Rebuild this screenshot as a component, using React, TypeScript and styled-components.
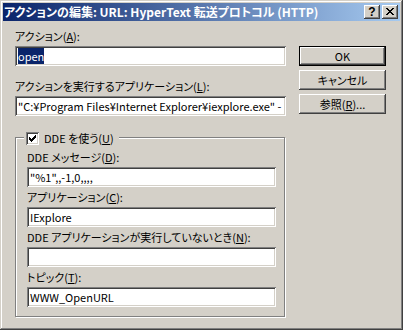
import React from "react";
import styled, { createGlobalStyle } from "styled-components";

const GlobalStyle = createGlobalStyle`
  html, body { margin: 0; padding: 0; background: #d4d0c8; }
  body {
    font-family: "Noto Sans CJK JP", "Liberation Sans", sans-serif;
    font-size: 11px;
    font-feature-settings: "palt";
    color: #000;
  }
`;

const Win = styled.div`
  width: 403px;
  height: 330px;
  box-sizing: border-box;
  padding: 3px;
  background: #d4d0c8;
  box-shadow: inset -1px -1px #404040, inset 1px 1px #d4d0c8,
    inset -2px -2px #808080, inset 2px 2px #ffffff;
  display: flex;
  flex-direction: column;
`;

const TitleBar = styled.div`
  height: 18px;
  flex-shrink: 0;
  background: linear-gradient(to right, #0a246a, #a6caf0);
  display: flex;
  align-items: center;
  padding: 0 2px 0 1px;
  color: #fff;
  font-weight: bold;
  font-size: 12px;
  line-height: 18px;
  white-space: nowrap;
`;

const TitleText = styled.span`
  flex: 1;
`;

const CapButtons = styled.div`
  display: flex;
  gap: 2px;
`;

const CapButton = styled.div`
  width: 16px;
  height: 14px;
  box-sizing: border-box;
  background: #d4d0c8;
  box-shadow: inset -1px -1px #404040, inset 1px 1px #ffffff,
    inset -2px -2px #808080, inset 2px 2px #d4d0c8;
  display: flex;
  align-items: center;
  justify-content: center;
  color: #000;
  font-family: "Liberation Sans", sans-serif;
  font-weight: bold;
  font-size: 12px;
  line-height: 14px;
  padding-bottom: 1px;
`;

const Body = styled.div`
  flex: 1;
  display: flex;
  padding: 9px 0 0 12px;
  gap: 13px;
`;

const LeftCol = styled.div`
  width: 271px;
  display: flex;
  flex-direction: column;
`;

const Label = styled.div<{ $top?: number }>`
  height: 13px;
  line-height: 13px;
  margin-top: ${(p) => p.$top ?? 0}px;
  margin-bottom: 3px;
  white-space: nowrap;
`;

const Field = styled.div`
  height: 20px;
  box-sizing: border-box;
  background: #fff;
  box-shadow: inset 1px 1px #808080, inset -1px -1px #ffffff,
    inset 2px 2px #404040, inset -2px -2px #d4d0c8;
  padding: 2px 2px 2px 3px;
  line-height: 16px;
  white-space: nowrap;
  overflow: hidden;
`;

const Sel = styled.span`
  background: #0a246a;
  color: #fff;
`;

const Key = styled.span`
  text-decoration: underline;
`;

const Group = styled.div`
  margin-top: 21px;
  position: relative;
  border: 1px solid #808080;
  box-shadow: inset 1px 1px #ffffff, 1px 1px #ffffff;
  padding: 13px 8px 9px 11px;
  width: 270px;
  box-sizing: border-box;
  display: flex;
  flex-direction: column;
`;

const Legend = styled.div`
  position: absolute;
  top: -6px;
  left: 8px;
  height: 13px;
  padding: 0 5px 0 2px;
  background: #d4d0c8;
  display: flex;
  align-items: center;
  gap: 5px;
  line-height: 13px;
  white-space: nowrap;
`;

const CheckBox = styled.div`
  width: 13px;
  height: 13px;
  box-sizing: border-box;
  background: #fff;
  box-shadow: inset 1px 1px #808080, inset -1px -1px #ffffff,
    inset 2px 2px #404040, inset -2px -2px #d4d0c8;
  display: flex;
  align-items: center;
  justify-content: center;
`;

const RightCol = styled.div`
  width: 87px;
  display: flex;
  flex-direction: column;
  padding-top: 16px;
  gap: 4px;
`;

const Button = styled.div<{ $default?: boolean }>`
  height: 20px;
  box-sizing: border-box;
  background: #d4d0c8;
  display: flex;
  align-items: center;
  justify-content: center;
  line-height: 13px;
  white-space: nowrap;
  box-shadow: ${(p) =>
    p.$default
      ? "inset 0 0 0 1px #000, inset -2px -2px #404040, inset 2px 2px #ffffff, inset -3px -3px #808080"
      : "inset -1px -1px #404040, inset 1px 1px #ffffff, inset -2px -2px #808080"};
`;

const Check = () => (
  <svg width="7" height="7" viewBox="0 0 7 7" shapeRendering="crispEdges">
    <path
      fill="#000"
      d="M6 0h1v1h-1zM5 1h2v1h-2zM0 2h1v1h-1zM4 2h3v1h-3zM0 3h2v1h-2zM3 3h3v1h-3zM0 4h5v1h-5zM1 5h3v1h-3zM2 6h1v1h-1z"
    />
  </svg>
);

const CloseGlyph = () => (
  <svg width="8" height="7" viewBox="0 0 8 7" shapeRendering="crispEdges">
    <path
      fill="#000"
      d="M0 0h2v1h-2zM6 0h2v1h-2zM1 1h2v1h-2zM5 1h2v1h-2zM2 2h4v1h-4zM3 3h2v1h-2zM2 4h4v1h-4zM1 5h2v1h-2zM5 5h2v1h-2zM0 6h2v1h-2zM6 6h2v1h-2z"
    />
  </svg>
);

export default function App() {
  return (
    <>
      <GlobalStyle />
      <Win>
        <TitleBar>
          <TitleText>アクションの編集: URL: HyperText 転送プロトコル (HTTP)</TitleText>
          <CapButtons>
            <CapButton>?</CapButton>
            <CapButton>
              <CloseGlyph />
            </CapButton>
          </CapButtons>
        </TitleBar>
        <Body>
          <LeftCol>
            <Label>
              アクション(<Key>A</Key>):
            </Label>
            <Field>
              <Sel>open</Sel>
            </Field>
            <Label $top={14}>
              アクションを実行するアプリケーション(<Key>L</Key>):
            </Label>
            <Field>"C:¥Program Files¥Internet Explorer¥iexplore.exe" -</Field>
            <Group>
              <Legend>
                <CheckBox>
                  <Check />
                </CheckBox>
                <span>
                  DDE を使う(<Key>U</Key>)
                </span>
              </Legend>
              <Label>
                DDE メッセージ(<Key>D</Key>):
              </Label>
              <Field>"%1",,-1,0,,,,</Field>
              <Label $top={4}>
                アプリケーション(<Key>C</Key>):
              </Label>
              <Field>IExplore</Field>
              <Label $top={4}>
                DDE アプリケーションが実行していないとき(<Key>N</Key>):
              </Label>
              <Field />
              <Label $top={4}>
                トピック(<Key>T</Key>):
              </Label>
              <Field>WWW_OpenURL</Field>
            </Group>
          </LeftCol>
          <RightCol>
            <Button $default>OK</Button>
            <Button>キャンセル</Button>
            <Button>
              <span>
                参照(<Key>R</Key>)...
              </span>
            </Button>
          </RightCol>
        </Body>
      </Win>
    </>
  );
}
